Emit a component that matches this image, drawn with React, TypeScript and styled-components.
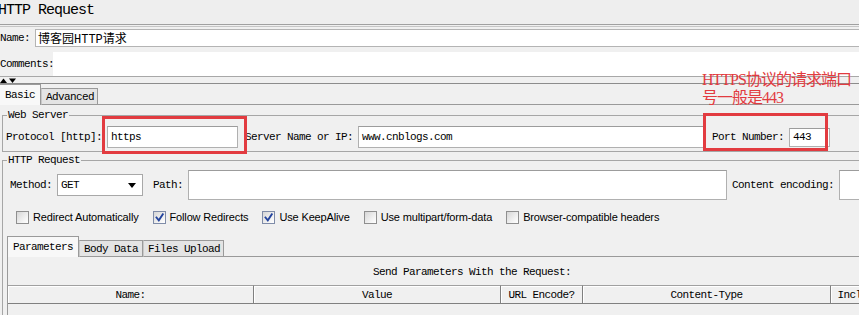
import React from 'react';
import styled, { createGlobalStyle } from 'styled-components';

const GlobalStyle = createGlobalStyle`
    html, body {
        margin: 0;
        padding: 0;
        background: #f0f0f0;
        overflow: hidden;
    }
`;

const MONO = `"Liberation Mono", "Noto Sans CJK SC", monospace`;
const RED = '#e23b40';

const ArrowsIcon = () => (
    <svg width="16" height="5" viewBox="0 0 16 5">
        <polygon points="0,5 3.5,0.5 7,5" fill="#000" />
        <polygon points="9,0.5 16,0.5 12.5,5" fill="#000" />
    </svg>
);

const DropIcon = () => (
    <svg width="8" height="5" viewBox="0 0 8 5">
        <polygon points="0,0 8,0 4,5" fill="#000" />
    </svg>
);

const CheckIcon = () => (
    <svg width="11" height="11" viewBox="0 0 11 11">
        <path d="M2.5 5.5 L4.8 8.3 L8.8 2.3" stroke="#23449e" strokeWidth="1.9" fill="none" strokeLinecap="square" />
    </svg>
);

const options = [
    { label: 'Redirect Automatically', checked: false },
    { label: 'Follow Redirects', checked: true },
    { label: 'Use KeepAlive', checked: true },
    { label: 'Use multipart/form-data', checked: false },
    { label: 'Browser-compatible headers', checked: false }
];

const columns = [
    { label: 'Name:', width: 246 },
    { label: 'Value', width: 247 },
    { label: 'URL Encode?', width: 82 },
    { label: 'Content-Type', width: 248 },
    { label: 'Include Equals?', width: 104 }
];

const App = () => {
    return (
        <>
            <GlobalStyle />
            <Screen>
                <Canvas>
                    <Title>HTTP Request</Title>
                    <Rule />
                    <NameRow>
                        <Label $w={35}>Name:</Label>
                        <NameInput>博客园HTTP请求</NameInput>
                    </NameRow>
                    <CommentsRow>
                        <Label $w={53}>Comments:</Label>
                        <CommentsArea />
                    </CommentsRow>
                    <SplitBar>
                        <ArrowsIcon />
                    </SplitBar>

                    <TabStrip>
                        <Tab $active $w={42} $first>Basic</Tab>
                        <Tab $w={57}>Advanced</Tab>
                        <TabFill />
                    </TabStrip>

                    <Group $mt={4} $pt={5} $pb={3}>
                        <Legend>Web Server</Legend>
                        <Row $h={22}>
                            <Label>Protocol [http]:</Label>
                            <TextBox $w={131} $h={22}>https</TextBox>
                            <Label $lead={2}>Server Name or IP:</Label>
                            <TextBox $w={346} $h={22}>www.cnblogs.com</TextBox>
                            <Label $lead={3}>Port Number:</Label>
                            <TextBox $w={41} $h={19}>443</TextBox>
                        </Row>
                    </Group>

                    <Group $mt={2} $pt={4} $pb={0}>
                        <Legend>HTTP Request</Legend>
                        <Row $h={30} $indent={4}>
                            <Label>Method:</Label>
                            <Select>
                                GET
                                <DropIcon />
                            </Select>
                            <Label $lead={5}>Path:</Label>
                            <TextBox $w={539} $h={30} />
                            <Label>Content encoding:</Label>
                            <TextBox $w={110} $h={30} />
                        </Row>
                        <Checks>
                            {options.map((o) => (
                                <Check key={o.label}>
                                    <CheckBox $on={o.checked}>{o.checked && <CheckIcon />}</CheckBox>
                                    {o.label}
                                </Check>
                            ))}
                        </Checks>
                        <InnerPane>
                            <TabStrip>
                                <Tab $active $w={72}>Parameters</Tab>
                                <Tab $w={64}>Body Data</Tab>
                                <Tab $w={81}>Files Upload</Tab>
                                <TabFill />
                            </TabStrip>
                            <Panel>
                                <Caption>Send Parameters With the Request:</Caption>
                                <HeaderRow>
                                    {columns.map((c) => (
                                        <HeaderCell key={c.label} $w={c.width}>
                                            {c.label}
                                        </HeaderCell>
                                    ))}
                                </HeaderRow>
                            </Panel>
                        </InnerPane>
                    </Group>
                </Canvas>

                <Mark $x={102} $y={116} $w={145} $h={38} />
                <Mark $x={703} $y={113} $w={125} $h={38} />
                <Note>
                    HTTPS协议的请求端口
                    <br />
                    号一般是443
                </Note>
            </Screen>
        </>
    );
};

const Screen = styled.div`
    position: relative;
    width: 859px;
    height: 315px;
    overflow: hidden;
    background: #f0f0f0;
    color: #000;
    font-family: ${MONO};
    font-size: 11px;
    letter-spacing: -0.6px;
`;

const Canvas = styled.div`
    width: 960px;
    display: flex;
    flex-direction: column;
`;

const Title = styled.div`
    height: 23px;
    padding-top: 1px;
    line-height: 20px;
    font-size: 15px;
    letter-spacing: -1px;
    margin-left: -2px;
    white-space: nowrap;
    background: #eeeeee;
`;

const Rule = styled.div`
    height: 1px;
    border-top: 1px solid #a0a0a0;
    border-bottom: 1px solid #c6c6c6;
`;

const NameRow = styled.div`
    display: flex;
    align-items: center;
    height: 18px;
    margin: 2px 0 5px;
`;

const Label = styled.span<{ $w?: number; $lead?: number }>`
    flex: none;
    white-space: nowrap;
    width: ${(p) => (p.$w ? `${p.$w}px` : 'auto')};
    margin-left: ${(p) => p.$lead || 0}px;
`;

const NameInput = styled.div`
    flex: 1;
    height: 18px;
    box-sizing: border-box;
    display: flex;
    align-items: center;
    padding-left: 2px;
    background: #fff;
    border: 1px solid #b4b4b4;
    border-right: none;
    font-size: 12px;
    letter-spacing: 0;
    white-space: nowrap;
`;

const CommentsRow = styled.div`
    display: flex;
    align-items: center;
    height: 24px;
    border-bottom: 1px solid #a8a8a8;
`;

const CommentsArea = styled.div`
    flex: 1;
    align-self: stretch;
    background: #fff;
`;

const SplitBar = styled.div`
    display: flex;
    align-items: center;
    height: 6px;
    border-bottom: 1px solid #8c8c8c;
`;

const TabStrip = styled.div`
    display: flex;
    align-items: flex-end;
    height: 21px;
`;

const Tab = styled.div<{ $active?: boolean; $w: number; $first?: boolean }>`
    flex: none;
    box-sizing: border-box;
    width: ${(p) => p.$w}px;
    height: ${(p) => (p.$active ? 21 : 17)}px;
    margin-left: ${(p) => (p.$first ? -1 : 0)}px;
    display: flex;
    align-items: center;
    padding: ${(p) => (p.$active ? '0 0 1px 5px' : '1px 0 0 4px')};
    background: ${(p) => (p.$active ? '#f8f8f8' : '#e4e4e4')};
    border: 1px solid #9a9a9a;
    border-bottom: ${(p) => (p.$active ? 'none' : '1px solid #9a9a9a')};
    border-left-color: ${(p) => (p.$active ? '#9a9a9a' : '#c8c8c8')};
    white-space: nowrap;
`;

const TabFill = styled.div`
    flex: 1;
    border-bottom: 1px solid #9a9a9a;
`;

const Group = styled.fieldset<{ $mt: number; $pt: number; $pb: number }>`
    margin: ${(p) => p.$mt}px 0 0 2px;
    padding: ${(p) => `${p.$pt}px 0 ${p.$pb}px 3px`};
    border: 1px solid #a6a6a6;
    min-width: 0;
`;

const Legend = styled.legend`
    margin-left: 1px;
    padding: 0 1px;
    line-height: 12px;
    font-size: 11px;
`;

const Row = styled.div<{ $h: number; $indent?: number }>`
    display: flex;
    align-items: center;
    gap: 5px;
    height: ${(p) => p.$h}px;
    margin-left: ${(p) => p.$indent || 0}px;
`;

const TextBox = styled.div<{ $w: number; $h: number }>`
    flex: none;
    box-sizing: border-box;
    width: ${(p) => p.$w}px;
    height: ${(p) => p.$h}px;
    display: flex;
    align-items: center;
    padding-left: 3px;
    background: #fff;
    border: 1px solid #b0b0b0;
    border-top-color: #9c9c9c;
    white-space: nowrap;
`;

const Select = styled.div`
    flex: none;
    box-sizing: border-box;
    width: 86px;
    height: 22px;
    display: flex;
    align-items: center;
    justify-content: space-between;
    padding: 0 6px 0 3px;
    background: #fff;
    border: 1px solid #a8a8a8;
`;

const Checks = styled.div`
    display: flex;
    align-items: center;
    gap: 14px;
    height: 14px;
    margin: 10px 0 0 10px;
    font-family: "Liberation Sans", Arial, sans-serif;
    font-size: 11px;
    letter-spacing: -0.15px;
`;

const Check = styled.label`
    display: flex;
    align-items: center;
    gap: 4px;
    white-space: nowrap;
`;

const CheckBox = styled.span<{ $on: boolean }>`
    box-sizing: border-box;
    width: 13px;
    height: 13px;
    display: flex;
    align-items: center;
    justify-content: center;
    border: 1px solid ${(p) => (p.$on ? '#7f8ca8' : '#8f8f8f')};
    background: linear-gradient(135deg, #d6d6d6 0%, #f4f4f4 70%, #ffffff 100%);
`;

const InnerPane = styled.div`
    width: 930px;
    margin: 12px 0 0 1px;
`;

const Panel = styled.div`
    display: flex;
    flex-direction: column;
    align-items: stretch;
    height: 60px;
    border-left: 1px solid #9a9a9a;
    border-right: 1px solid #9a9a9a;
`;

const Caption = styled.div`
    margin-top: 9px;
    line-height: 12px;
    text-align: center;
    white-space: nowrap;
`;

const HeaderRow = styled.div`
    display: flex;
    margin-top: 7px;
    height: 19px;
`;

const HeaderCell = styled.div<{ $w: number }>`
    flex: none;
    box-sizing: border-box;
    width: ${(p) => p.$w}px;
    display: flex;
    align-items: center;
    justify-content: center;
    background: #f0f0f0;
    border-top: 1px solid #a0a0a0;
    border-bottom: 1px solid #808080;
    border-right: 1px solid #808080;
    box-shadow: inset 1px 1px 0 #ffffff;
    white-space: nowrap;
    overflow: hidden;
`;

const Mark = styled.div<{ $x: number; $y: number; $w: number; $h: number }>`
    position: absolute;
    left: ${(p) => p.$x}px;
    top: ${(p) => p.$y}px;
    width: ${(p) => p.$w}px;
    height: ${(p) => p.$h}px;
    box-sizing: border-box;
    border: 3px solid ${RED};
`;

const Note = styled.div`
    position: absolute;
    left: 702px;
    top: 71px;
    color: ${RED};
    font-family: "Liberation Serif", "Noto Sans CJK SC", serif;
    font-size: 16px;
    line-height: 18px;
    letter-spacing: -1px;
    white-space: nowrap;
`;

export default App;
